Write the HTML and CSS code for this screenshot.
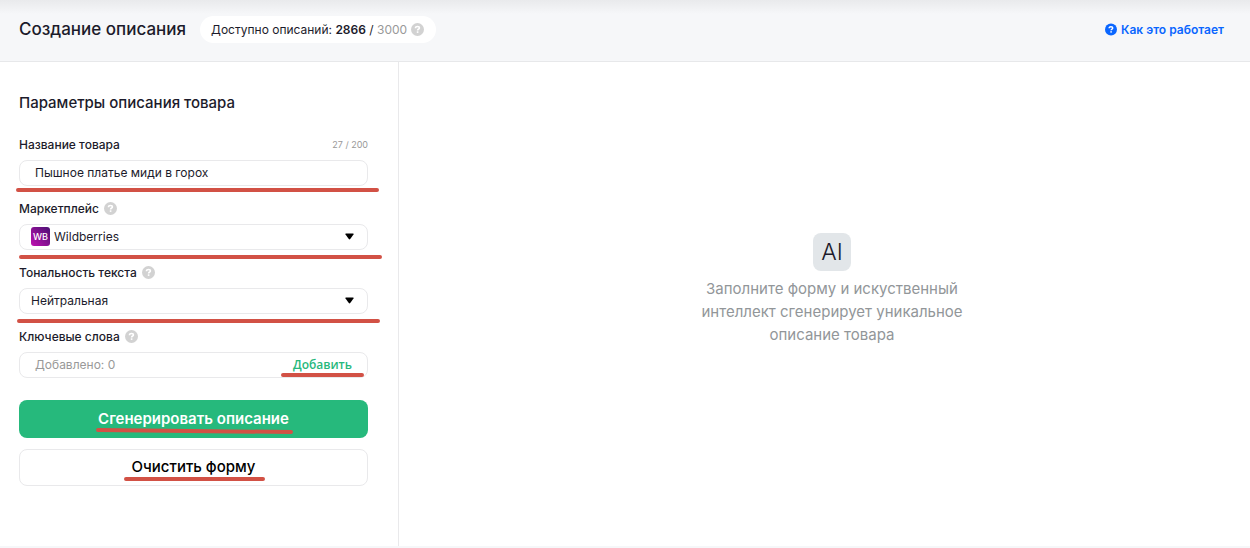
FILE: index.html
```html
<!DOCTYPE html>
<html lang="ru">
<head>
<meta charset="utf-8">
<title>Создание описания</title>
<meta name="viewport" content="width=device-width, initial-scale=1">
<link rel="stylesheet" href="styles.css">
</head>
<body>
<svg class="defs" aria-hidden="true">
  <symbol id="help" viewBox="0 0 13 13">
    <circle cx="6.5" cy="6.5" r="6.5" fill="currentColor"/>
    <path d="M4.500 5.200c0-1.100.8-1.700 2-1.700s1.900.6 1.900 1.400c0 1.200-1.800 1-1.800 2.500" fill="none" stroke="#fff" stroke-width="1.600"/>
    <rect x="5.800" y="8.300" width="1.600" height="1.600" fill="#fff"/>
  </symbol>
  <symbol id="arrow" viewBox="0 0 9 7">
    <path d="M1 .5h7q1 0 .5 1L5.200 6q-.7.900-1.400 0L.5 1.500Q0 .5 1 .5z" fill="#000"/>
  </symbol>
</svg>

<header class="header">
  <h1 class="title">Создание описания</h1>
  <div class="quota">
    <span>Доступно описаний: <b class="quota-left">2866</b> / <span class="quota-total">3000</span></span>
    <svg class="help"><use href="#help"/></svg>
  </div>
  <a class="how" href="#"><svg class="how-icon"><use href="#help"/></svg>Как это работает</a>
</header>

<main class="main">
  <form class="sidebar">
    <h2 class="subtitle">Параметры описания товара</h2>

    <div class="field">
      <div class="label-row">
        <label for="name">Название товара</label>
        <span class="counter">27 / 200</span>
      </div>
      <input class="control" id="name" type="text" value="Пышное платье миди в горох">
    </div>

    <div class="field">
      <div class="label-row">
        <label for="market">Маркетплейс</label>
        <svg class="help"><use href="#help"/></svg>
      </div>
      <div class="select-box">
        <select class="control select with-logo" id="market"><option>Wildberries</option></select>
        <span class="wb">WB</span>
        <svg class="arrow"><use href="#arrow"/></svg>
      </div>
    </div>

    <div class="field">
      <div class="label-row">
        <label for="tone">Тональность текста</label>
        <svg class="help"><use href="#help"/></svg>
      </div>
      <div class="select-box">
        <select class="control select" id="tone"><option>Нейтральная</option></select>
        <svg class="arrow"><use href="#arrow"/></svg>
      </div>
    </div>

    <div class="field">
      <div class="label-row">
        <span>Ключевые слова</span>
        <svg class="help"><use href="#help"/></svg>
      </div>
      <div class="control keywords">
        <span>Добавлено: 0</span>
        <button class="add" type="button">Добавить</button>
      </div>
    </div>

    <div class="actions">
      <button class="btn btn-primary" type="button">Сгенерировать описание</button>
      <button class="btn btn-plain" type="button">Очистить форму</button>
    </div>

    <svg class="marks" viewBox="0 0 398 440" aria-hidden="true">
      <path d="M18 128H377M21 195H380M19 259H378M283 313H362M98 368L291 370M126 417H263"/>
    </svg>
  </form>

  <section class="result">
    <div class="ai">AI</div>
    <p class="hint">Заполните форму и искуственный интеллект сгенерирует уникальное описание товара</p>
  </section>
</main>
</body>
</html>
```
FILE: styles.css
```css
* { box-sizing: border-box; }

body {
  margin: 0;
  min-height: 100vh;
  display: flex;
  flex-direction: column;
  padding-bottom: 2px;
  background: #f6f7f9;
  color: #1c1b2b;
  font-family: Inter, "Liberation Sans", sans-serif;
  font-size: 12px;
}

.defs { position: absolute; width: 0; height: 0; }

.header {
  display: flex;
  align-items: center;
  gap: 14px;
  height: 62px;
  padding: 0 26px 2px 19px;
  border-bottom: 1px solid #e7e8ea;
  background: linear-gradient(#e9eaec, #f6f7f9 14px);
}

.title { margin: 0; padding-bottom: 2px; font-size: 17px; font-weight: 500; }

.quota {
  display: flex;
  align-items: center;
  gap: 4px;
  height: 27px;
  padding: 0 12px 0 11px;
  border-radius: 14px;
  background: #fff;
}
.quota-left { font-weight: 600; }
.quota-total { color: #999; }

.help { width: 13px; height: 13px; color: #d2d2d2; }

.how {
  display: flex;
  align-items: center;
  gap: 4px;
  margin-left: auto;
  color: #0a66ff;
  font-weight: 600;
  text-decoration: none;
}
.how-icon { width: 12px; height: 13px; }

.main { flex: 1; display: flex; background: #fff; }

.sidebar {
  position: relative;
  flex: 0 0 399px;
  padding: 31px 30px 30px 19px;
  border-right: 1px solid #e9e9eb;
}

.subtitle {
  margin: 0 0 24px;
  font-size: 15px;
  font-weight: 500;
  line-height: 20px;
}

.field { margin-bottom: 15px; }

.label-row {
  display: flex;
  align-items: center;
  gap: 5px;
  height: 15px;
  margin-bottom: 8px;
  font-weight: 500;
}
.counter {
  margin-left: auto;
  color: #999;
  font-size: 9px;
  font-weight: 400;
}

.control {
  display: block;
  width: 100%;
  height: 26px;
  padding: 0 15px 2px;
  border: 1px solid #e9e9eb;
  border-radius: 8px;
  background: #fff;
  color: #1c1b2b;
  font-family: inherit;
  font-size: 12px;
  font-weight: 400;
}

.select-box { position: relative; }
.select { appearance: none; padding: 0 11px 2px; }
.with-logo { padding-left: 34px; }
.arrow { position: absolute; right: 14px; top: 9px; width: 9px; height: 7px; }
.wb {
  position: absolute;
  left: 12px;
  top: 3px;
  width: 19px;
  height: 19px;
  border-radius: 3px;
  background: linear-gradient(45deg, #c010b0, #4a1173);
  color: #fff;
  font-size: 9px;
  font-weight: 500;
  line-height: 20px;
  text-align: center;
}

.keywords {
  display: flex;
  align-items: center;
  justify-content: space-between;
  color: #999;
}
.add {
  padding: 0;
  border: 0;
  background: none;
  color: #26b87c;
  font: 600 12px "Open Sans", sans-serif;
}

.actions { display: grid; gap: 11px; margin-top: 22px; }
.btn {
  height: 38px;
  padding: 0 0 2px;
  border-radius: 8px;
  font-family: inherit;
  font-size: 15px;
}
.btn-primary { border: 0; background: #26b97c; color: #fff; font-weight: 600; }
.btn-plain { height: 37px; border: 1px solid #e9e9eb; background: #fff; color: #000; font-weight: 500; }

.marks {
  position: absolute;
  left: 0;
  top: 0;
  width: 398px;
  height: 440px;
  pointer-events: none;
  fill: none;
  stroke: #d25145;
  stroke-width: 4;
  stroke-linecap: round;
}

.result {
  flex: 1;
  display: flex;
  flex-direction: column;
  align-items: center;
  justify-content: center;
  padding: 0 24px 30px 39px;
}
.ai {
  width: 38px;
  height: 38px;
  border-radius: 8px;
  background: #e2e6e9;
  font-size: 23px;
  font-weight: 350;
  line-height: 38px;
  text-align: center;
}
.hint {
  max-width: 280px;
  margin: 6px 0 0;
  color: #929699;
  font-size: 15px;
  line-height: 23px;
  text-align: center;
}
```
